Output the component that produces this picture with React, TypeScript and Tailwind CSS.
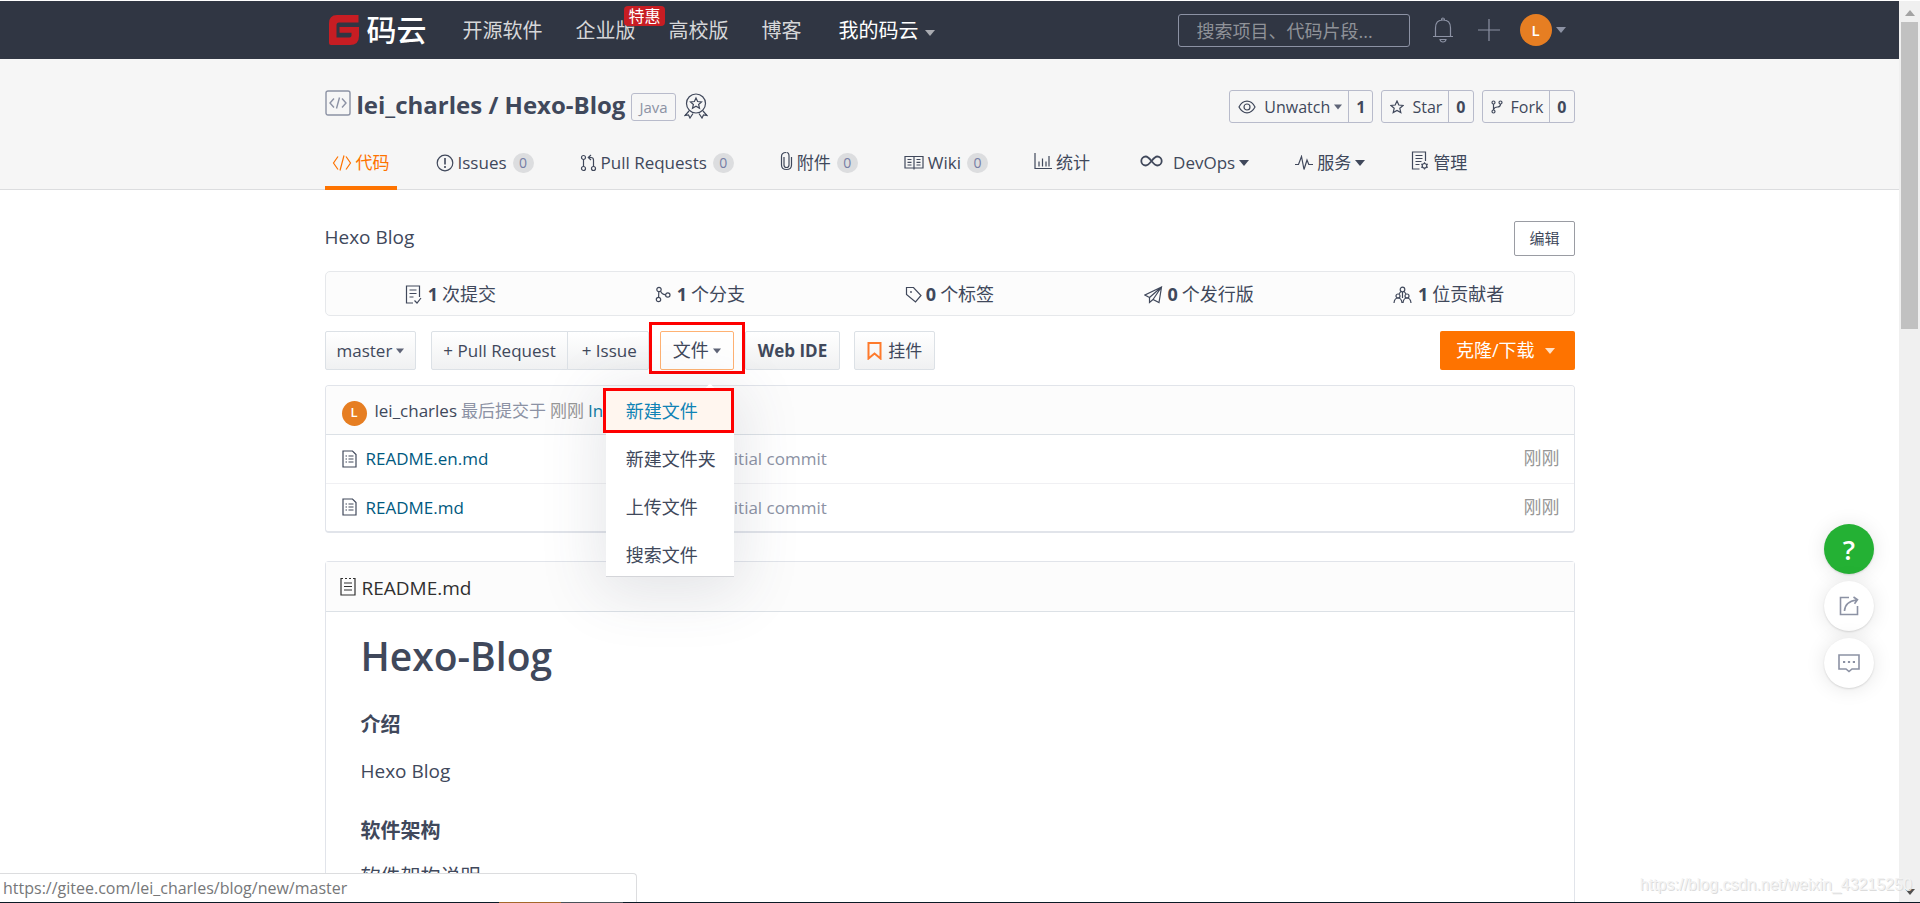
import type { ReactNode } from "react";
import clsx from "clsx";

const stats = [
  { icon: <CommitIcon />, count: 1, label: "次提交" },
  { icon: <BranchIcon />, count: 1, label: "个分支" },
  { icon: <TagIcon />, count: 0, label: "个标签" },
  { icon: <PlaneIcon />, count: 0, label: "个发行版" },
  { icon: <PeopleIcon />, count: 1, label: "位贡献者" },
];

const tabs = [
  { icon: <CodeIcon />, label: "代码", active: true },
  { icon: <IssueIcon />, label: "Issues", count: 0 },
  { icon: <PullIcon />, label: "Pull Requests", count: 0 },
  { icon: <ClipIcon />, label: "附件", count: 0 },
  { icon: <WikiIcon />, label: "Wiki", count: 0 },
  { icon: <ChartIcon />, label: "统计" },
  { icon: <InfinityIcon />, label: "DevOps", caret: true },
  { icon: <PulseIcon />, label: "服务", caret: true },
  { icon: <ManageIcon />, label: "管理" },
];

const files = ["README.en.md", "README.md"];
const menu = ["新建文件", "新建文件夹", "上传文件", "搜索文件"];

type SvgProps = { w: number; h: number; sw?: number; className?: string; children: ReactNode };

function Svg({ w, h, sw = 1.2, className, children }: SvgProps) {
  return (
    <svg
      width={w}
      height={h}
      viewBox={`0 0 ${w} ${h}`}
      fill="none"
      stroke="currentColor"
      strokeWidth={sw}
      className={clsx("shrink-0", className)}
      aria-hidden="true"
    >
      {children}
    </svg>
  );
}

function CodeIcon() {
  return (
    <Svg w={20} h={18}>
      <path d="M6 2.5 1.5 9 6 15.5M14 2.5 18.5 9 14 15.5M12 1.5 8 16.5" />
    </Svg>
  );
}

function IssueIcon() {
  return (
    <Svg w={18} h={18}>
      <circle cx="9" cy="9" r="7.8" />
      <path d="M9 4v6.500M9 12v2" strokeWidth="1.6" />
    </Svg>
  );
}

function PullIcon() {
  return (
    <Svg w={17} h={18}>
      <circle cx="3.500" cy="3.500" r="2" />
      <circle cx="3.500" cy="14.500" r="2" />
      <circle cx="13.500" cy="14.500" r="2" />
      <path d="M3.500 5.500v7M13.500 12.500V6q0-2.500-2.500-2.500H8.500M11 1 8.300 3.500 11 6" />
    </Svg>
  );
}

function ClipIcon() {
  return (
    <Svg w={13} h={20} className="mb-1">
      <path d="M4 6v8q0 2.500 2.500 2.500T9 14V5Q9 1.500 6.500 1.500M11.500 6v8q0 4.500-5 4.500t-5-4.500V5.500q0-4 4.500-4" />
    </Svg>
  );
}

function WikiIcon() {
  return (
    <Svg w={20} h={15}>
      <path d="M1 1.500h18v11.500H1zM10 1.500v13M3.500 4.500h4M3.500 7.300h4M3.500 10h4M12.500 4.500h4M12.500 7.300h4M12.500 10h4" />
    </Svg>
  );
}

function ChartIcon() {
  return (
    <Svg w={18} h={18} className="mb-1">
      <path d="M1 1v15.500h17M5 9.500v5M8.500 6.500v8M12 9.500v5M15 4v10.500" />
    </Svg>
  );
}

function InfinityIcon() {
  return (
    <Svg w={23} h={12} sw={1.8} className="mb-1 ml-1 mr-1.5">
      <path d="M11.500 6C9.500 3.500 8 1.500 5.800 1.500a4.500 4.500 0 0 0 0 9C8 10.500 9.500 8.500 11.500 6s3.500-4.500 5.700-4.500a4.500 4.500 0 0 1 0 9C15 10.500 13.500 8.500 11.500 6Z" />
    </Svg>
  );
}

function PulseIcon() {
  return (
    <Svg w={18} h={16}>
      <path d="M0 9.500h3.500L6.500 1.500l2.500 13 3-9.500 1.800 4.500H18" />
    </Svg>
  );
}

function ManageIcon() {
  return (
    <Svg w={18} h={19} className="mb-1">
      <path d="M8.500 18H1.500V1h13v9M4.500 4.500h7M4.500 7.500h7M4.500 10.500h6M4.500 13.500h4" />
      <circle cx="13.500" cy="14.800" r="2.300" />
      <path d="M13.500 11.200v1.200M13.500 17.200v1.300M10.300 13l1 .6M15.800 16l1 .6M10.300 16.600l1-.6M15.800 13.600l1-.6" />
    </Svg>
  );
}

function CommitIcon() {
  return (
    <Svg w={17} h={19} className="mr-0.5">
      <path d="M8 18H1.500V1h13v11M4.500 5h7M4.500 8.500h7M4.500 12h4" />
      <path d="m9.500 15.500 2.500 2.500 4-5" />
    </Svg>
  );
}

function BranchIcon() {
  return (
    <Svg w={16} h={17} className="mr-0.5">
      <circle cx="4" cy="3.500" r="2.200" />
      <circle cx="3.500" cy="13.500" r="2.200" />
      <circle cx="12.800" cy="9" r="2.200" />
      <path d="M3.800 5.700 3.600 11.300M5.500 5q1.500 3.500 5 3.800" />
    </Svg>
  );
}

function TagIcon() {
  return (
    <Svg w={17} h={17}>
      <path d="M1.500 1.500h7l7.500 8-5.500 6.500-9-7.500z" />
      <circle cx="6" cy="6" r=".9" fill="currentColor" stroke="none" />
    </Svg>
  );
}

function PlaneIcon() {
  return (
    <Svg w={19} h={18}>
      <path d="M17.500 1 1 9l4.500 2.500v5L9 13.500l6 3zM17.500 1l-12 10.500M17.500 1 9 13.500" />
    </Svg>
  );
}

function PeopleIcon() {
  return (
    <Svg w={19} h={18} className="mr-0.5">
      <circle cx="9.500" cy="3.500" r="2.300" />
      <circle cx="5" cy="10" r="2" />
      <circle cx="14" cy="10" r="2" />
      <path d="M7.800 5.500 6 8M11.200 5.500 13 8M1 17q.5-5 4-5t4 5M10 17q.5-5 4-5t4 5M9.500 6v6" />
    </Svg>
  );
}

function FileIcon() {
  return (
    <Svg w={15} h={18}>
      <path d="M1 1h9.500L14 4.500V17H1z" />
      <path d="M3.500 6h1.500M6.500 6h5M3.500 9h1.500M6.500 9h5M3.500 12h1.500M6.500 12h5" />
    </Svg>
  );
}

function ReadmeIcon() {
  return (
    <Svg w={16} h={19} className="mb-1">
      <path d="M3 1.500H1V18h14V1.500h-2M5 1.500h2M9 1.500h2M4 6h8M4 9.500h8M4 13h8" />
    </Svg>
  );
}

function Caret({ className }: { className?: string }) {
  return (
    <svg width="10" height="6" viewBox="0 0 10 6" className={clsx("shrink-0", className)} aria-hidden="true">
      <path d="M0 0h10L5 6z" fill="currentColor" />
    </svg>
  );
}

function Header() {
  return (
    <header className="bg-[#303643]">
      <div className="mx-auto flex h-[58px] max-w-[1250px] items-center">
        <a href="#" className="ml-1 mr-9 flex w-[98px] items-center gap-2">
          <svg width="30" height="30" viewBox="0 0 30 30" aria-hidden="true">
            <path
              d="M8 0H29.500V7.500H10Q7.500 7.500 7.500 10V22.500H20.500Q22.500 22.500 22.500 20.500V17.800H10.500V12H30V21Q30 30 21 30H2Q0 30 0 28V8.500Q0 0 8 0Z"
              fill="#c71d23"
            />
          </svg>
          <span className="text-[30px] font-medium leading-none text-white">码云</span>
        </a>
        <nav className="flex items-center gap-[33px] pt-0.5 text-[20px] text-[#d6d7d9]">
          <a href="#">开源软件</a>
          <a href="#" className="relative">
            企业版
            <span className="absolute -right-[29px] -top-2.5 rounded-sm bg-[#c71d23] px-1 text-[16px] leading-5 text-white">
              特惠
            </span>
          </a>
          <a href="#">高校版</a>
          <a href="#" className="mr-1">博客</a>
          <a href="#" className="flex items-center gap-1.5 text-white">
            我的码云
            <Caret className="mt-1 text-[#a9abb1]" />
          </a>
        </nav>
        <div className="ml-auto flex items-center text-[#8c92a4]">
          <input
            type="text"
            aria-label="搜索"
            placeholder="搜索项目、代码片段..."
            className="h-[33px] w-[232px] rounded-[3px] border border-[#8c92a4] bg-transparent px-[18px] pt-0.5 text-[18px] placeholder:text-[#8f9298]"
          />
          <button aria-label="通知" className="ml-[22px]">
            <Svg w={22} h={26}>
              <path d="M1 19.500h20M3.500 19.500V11q0-8 7.500-8t7.500 8v8.500M9.500 3q0-2 1.500-2t1.500 2M8 22.500q.5 2.500 3 2.500t3-2.500z" />
            </Svg>
          </button>
          <button aria-label="新建" className="ml-6">
            <Svg w={22} h={22}>
              <path d="M0 11h22M11 0v22" />
            </Svg>
          </button>
          <button className="ml-5 mr-[9px] flex items-center gap-1">
            <span className="flex size-8 items-center justify-center rounded-full bg-[#e67e22] text-[15px] font-semibold text-white">
              L
            </span>
            <Caret />
          </button>
        </div>
      </div>
    </header>
  );
}

function CountButton({ icon, label, count, caret }: { icon: ReactNode; label: string; count: number; caret?: boolean }) {
  return (
    <div className="flex h-[33px] items-center rounded-[3px] border border-[#b8bbcb] text-[16px]">
      <button className="flex items-center gap-2 pl-2 pr-1.5">
        {icon}
        <span className="flex items-center gap-1">
          {label}
          {caret && <Caret className="w-2 text-[#5f6477]" />}
        </span>
      </button>
      <a href="#" className="flex h-full items-center border-l border-[#b8bbcb] px-[7px] font-bold">
        {count}
      </a>
    </div>
  );
}

function RepoHeader() {
  return (
    <div className="border-b border-[#dcdddf] bg-[#f6f6f6]">
      <div className="mx-auto max-w-[1250px] pt-[31px]">
        <div className="flex items-start">
          <Svg w={26} h={26} sw={1.4} className="mr-1.5 text-[#8c92a4]">
            <rect x="1" y="1" width="24" height="24" rx="2" />
            <path d="M9 8.500 5 13l4 4.500M17 8.500l4 4.500-4 4.500M14.500 7.500l-3 11" />
          </Svg>
          <h1 className="text-[24px] font-bold leading-[30px]">
            <a href="#">lei_charles</a> / <a href="#">Hexo-Blog</a>
          </h1>
          <a
            href="#"
            className="ml-1.5 mt-[3px] rounded-[3px] border border-[#b8bbcb] px-[7px] text-[15px] leading-[26px] text-[#8c92a4]"
          >
            Java
          </a>
          <Svg w={24} h={26} className="ml-2 mt-[3px]">
            <circle cx="12" cy="10.500" r="9.500" />
            <path d="m12 5 1.600 3.500 3.900.4-2.900 2.600.9 3.800-3.500-2-3.500 2 .9-3.800L6.500 8.900l3.900-.4zM5 18l-4 4.500 3.500-.5 1.500 3 3-4.500M19 18l4 4.500-3.500-.5-1.500 3-3-4.500" />
          </Svg>
          <div className="ml-auto flex gap-2">
            <CountButton
              label="Unwatch"
              count={1}
              caret
              icon={
                <Svg w={18} h={14}>
                  <path d="M1 7q3-5.800 8-5.800T17 7q-3 5.800-8 5.800T1 7Z" />
                  <circle cx="9" cy="7" r="3" />
                </Svg>
              }
            />
            <CountButton
              label="Star"
              count={0}
              icon={
                <Svg w={14} h={14}>
                  <path d="m7 1 1.800 4 4.300.4-3.300 2.900 1 4.300L7 10.400l-3.800 2.200 1-4.300L.9 5.400 5.200 5z" />
                </Svg>
              }
            />
            <CountButton
              label="Fork"
              count={0}
              icon={
                <Svg w={12} h={14}>
                  <circle cx="2.500" cy="2.500" r="1.500" />
                  <circle cx="9.500" cy="2.500" r="1.500" />
                  <circle cx="2.500" cy="11.500" r="1.500" />
                  <path d="M2.500 4v6M9.500 4q0 3-3 3T2.500 9.500" />
                </Svg>
              }
            />
          </div>
        </div>
        <nav className="mt-3 flex gap-8 text-[17px]">
          {tabs.map((tab) => (
            <a
              key={tab.label}
              href="#"
              className={clsx(
                "-mb-px flex h-[55px] items-center gap-1 border-b-4 px-[7px] pt-1",
                tab.active ? "border-[#fe7300] text-[#fe7300]" : "border-transparent",
              )}
            >
              {tab.icon}
              {tab.label}
              {tab.count !== undefined && (
                <span className="ml-0.5 flex h-5 min-w-[21px] items-center justify-center rounded-full bg-[#dcdddf] text-[14px] text-[#767ea5]">
                  {tab.count}
                </span>
              )}
              {tab.caret && <Caret />}
            </a>
          ))}
        </nav>
      </div>
    </div>
  );
}

const toolBtn =
  "flex h-[39px] items-center border border-[#dce1e6] bg-linear-to-b from-white to-[#f0f1f2] text-[17px]";

function Toolbar() {
  return (
    <div className="mt-[15px] flex">
      <button className={clsx(toolBtn, "gap-1 rounded-xs px-[11px]")}>
        master <Caret className="w-2 text-[#5f6477]" />
      </button>
      <div className="ml-[15px] flex">
        <button className={clsx(toolBtn, "rounded-l-xs px-[11px]")}>+ Pull Request</button>
        <button className={clsx(toolBtn, "-ml-px rounded-r-xs pl-3.5 pr-[11px]")}>+ Issue</button>
      </div>
      <div className="relative mx-[11px]">
        <button className="flex h-[39px] items-center gap-1 rounded-xs border border-[#ffb273] bg-white px-3 text-[18px]">
          文件 <Caret className="w-2 text-[#5f6477]" />
        </button>
        <span className="pointer-events-none absolute -bottom-1 -left-[11px] -right-[11px] -top-[9px] border-[3px] border-[#fe0000]" />
        <FileMenu />
      </div>
      <button className={clsx(toolBtn, "rounded-xs px-3 font-bold")}>Web IDE</button>
      <button className={clsx(toolBtn, "ml-3.5 gap-1.5 rounded-xs px-3")}>
        <Svg w={15} h={18} sw={2} className="text-[#fe7a2c]">
          <path d="M1.500 1h12v15.500l-6-5-6 5z" />
        </Svg>
        挂件
      </button>
      <button className="ml-auto flex h-[39px] items-center gap-2.5 rounded-xs bg-[#fe7300] pl-4 pr-5 text-[18px] text-white">
        克隆/下载 <Caret className="text-[#ffe0c6]" />
      </button>
    </div>
  );
}

function FileMenu() {
  return (
    <ul className="absolute right-0 top-[59px] z-10 flex w-32 flex-col gap-1.5 border-b border-[#d4d5d9] bg-white shadow-[0_8px_60px_8px_rgba(60,66,90,0.13)]">
      <li className="absolute -top-1 left-[98px] size-3 rotate-45 bg-white" />
      {menu.map((item, i) => (
        <li key={item} className="relative">
          <a
            href="#"
            className={clsx(
              "flex h-[42px] items-center pl-5 text-[18px]",
              i === 0 && "bg-[#fff6ef] text-[#1083b5]",
            )}
          >
            {item}
          </a>
          {i === 0 && (
            <span className="pointer-events-none absolute -bottom-px -left-[3px] -top-0.5 right-0 border-[3px] border-[#fe0000]" />
          )}
        </li>
      ))}
    </ul>
  );
}

function FileTable() {
  return (
    <div className="mt-[15px] overflow-hidden rounded-[4px] border border-b-2 border-[#e1e4ea]">
      <div className="flex h-[49px] items-center border-b border-[#dce1e6] bg-[#fcfcfc] px-4 pt-0.5 text-[17px]">
        <span className="mt-1 flex size-[25px] items-center justify-center rounded-full bg-[#e67e22] text-[13px] font-semibold text-white">
          L
        </span>
        <a href="#" className="ml-2">lei_charles</a>
        <span className="ml-1 text-[#8c92a4]">最后提交于</span>
        <span className="ml-1 text-[#979797]">刚刚</span>
        <a href="#" className="ml-1 text-[#0b7ba5]">Initial commit</a>
      </div>
      <table className="w-full table-fixed text-[17px]">
        <tbody>
          {files.map((name) => (
            <tr key={name} className="h-12 border-b border-[#f0f0f3] text-[#8c92a4] last:border-b-0">
              <td className="w-[31.5%] pl-4">
                <a href="#" className="flex items-center gap-[9px] text-[#005980]">
                  <span className="text-[#40485b]">
                    <FileIcon />
                  </span>
                  {name}
                </a>
              </td>
              <td>Initial commit</td>
              <td className="w-32 pr-3.5 text-right text-[18px] text-[#979797]">刚刚</td>
            </tr>
          ))}
        </tbody>
      </table>
    </div>
  );
}

function Readme() {
  return (
    <article className="mt-7 flex-1 rounded-t-[4px] border border-b-0 border-[#e1e4ea]">
      <div className="flex h-[50px] items-center gap-1.5 border-b border-[#dce1e6] bg-[#fcfcfc] pl-3.5 pt-1 text-[19px] text-[#303030]">
        <ReadmeIcon />
        README.md
      </div>
      <div className="px-[35px] text-[19px]">
        <h1 className="mt-3.5 text-[39px] font-semibold leading-[60px]">Hexo-Blog</h1>
        <h3 className="mt-6 text-[20px] font-bold leading-[30px]">介绍</h3>
        <p className="mt-4 leading-[30px]">Hexo Blog</p>
        <h3 className="mt-[30px] text-[20px] font-bold leading-[30px]">软件架构</h3>
        <p className="mt-4 text-[20px] leading-[30px]">软件架构说明</p>
      </div>
    </article>
  );
}

function FloatingTools() {
  const round = "flex size-[50px] items-center justify-center rounded-full shadow-[0_1px_20px_rgba(0,0,0,0.1),0_1px_2px_rgba(0,0,0,0.12)]";
  return (
    <div className="absolute right-[25px] top-[523px] flex flex-col gap-[7px] text-[#8c92a4]">
      <button aria-label="帮助" className={clsx(round, "bg-[#24b134]")}>
        <span className="text-[27px] font-semibold leading-none text-white">?</span>
      </button>
      <button aria-label="分享" className={clsx(round, "bg-white")}>
        <Svg w={20} h={20} sw={1.6}>
          <path d="M10 1.500H1.500v17h17V10M5.500 15q.5-9.500 12-11M14.500 1l4 2.800-3 4" />
        </Svg>
      </button>
      <button aria-label="评论" className={clsx(round, "bg-white")}>
        <Svg w={22} h={20} sw={1.6}>
          <path d="M1 2h20v14h-7l-3 2.500L8 16H1z" />
          <path d="M5 9h2.200M9.900 9h2.200M14.800 9H17" strokeWidth="2.2" />
        </Svg>
      </button>
    </div>
  );
}

function Scrollbar() {
  return (
    <div className="flex w-[21px] shrink-0 flex-col items-center bg-[#f0f0f0] pb-[7px] pt-[9px]">
      <Caret className="rotate-180 text-[#a3a3a3]" />
      <div className="mt-1.5 h-[34.7%] w-[17px] bg-[#c1c1c1]" />
      <Caret className="mt-auto text-[#505050]" />
    </div>
  );
}

export default function App() {
  return (
    <div className="relative flex h-screen flex-col overflow-hidden bg-white pt-px font-['Open_Sans','Noto_Sans_CJK_SC',sans-serif] text-[#40485b]">
      <div className="flex min-h-0 flex-1">
        <div className="relative flex min-w-0 flex-1 flex-col overflow-hidden">
          <Header />
          <RepoHeader />
          <main className="mx-auto flex w-full max-w-[1250px] flex-1 flex-col">
            <div className="mt-[31px] flex items-center justify-between">
              <p className="pb-0.5 text-[19px]">Hexo Blog</p>
              <button className="h-[35px] rounded-xs border border-[#9a9ca3] px-3.5 text-[15px]">编辑</button>
            </div>
            <div className="mt-[15px] flex h-[45px] items-center rounded-[5px] border border-[#e6e8eb] bg-[#fcfcfc] pt-0.5 text-[18px]">
              {stats.map((s) => (
                <a key={s.label} href="#" className="flex flex-1 items-center justify-center gap-1">
                  {s.icon}
                  <b>{s.count}</b>
                  {s.label}
                </a>
              ))}
            </div>
            <Toolbar />
            <FileTable />
            <Readme />
          </main>
          <FloatingTools />
        </div>
        <Scrollbar />
      </div>
      <div className="absolute bottom-px left-0 h-[29px] w-[33.2%] rounded-tr-[4px] border border-b-0 border-l-0 border-[#dcdddf] bg-white pl-[3px] text-[16px] leading-7 text-[#767779]">
        https://gitee.com/lei_charles/blog/new/master
      </div>
      <p className="absolute bottom-1.5 right-2 font-['Liberation_Sans',sans-serif] text-[16px] text-[#f3f3f3] [text-shadow:1px_1px_0_#dcdcdc]">
        https://blog.csdn.net/weixin_43215250
      </p>
      <div className="flex h-px bg-[#0b1a26]">
        <span className="ml-[26%] w-[62px] bg-[#a5682a]" />
        <span className="w-[62px] bg-[#4a5158]" />
      </div>
    </div>
  );
}
